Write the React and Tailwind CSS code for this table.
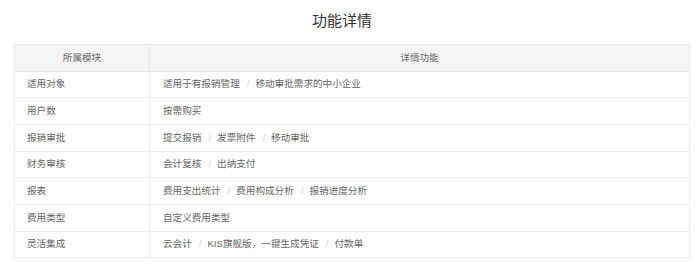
import React from "react";

const rows = [
  ["适用对象", ["适用于有报销管理", "移动审批需求的中小企业"]],
  ["用户数", ["按需购买"]],
  ["报销审批", ["提交报销", "发票附件", "移动审批"]],
  ["财务审核", ["会计复核", "出纳支付"]],
  ["报表", ["费用支出统计", "费用构成分析", "报销进度分析"]],
  ["费用类型", ["自定义费用类型"]],
  ["灵活集成", ["云会计", "KIS旗舰版，一键生成凭证", "付款单"]],
];

export default function App() {
  return (
    <div
      className="w-[700px] h-[270px] bg-white overflow-hidden"
      style={{ fontFamily: '"Liberation Sans", "Noto Sans CJK SC", sans-serif' }}
    >
      <div className="h-[44px] flex items-center justify-center pr-[16px] pb-[2px] text-[15px] text-[#333]">
        功能详情
      </div>
      <table className="ml-[14px] w-[676px] border-collapse border border-[#e8e8e8] text-[9.6px] text-[#666]">
        <thead>
          <tr className="h-[26.67px] bg-[#f5f5f5]">
            <th className="w-[135px] font-normal text-center border border-[#e8e8e8] p-0">所属模块</th>
            <th className="font-normal text-center border border-[#e8e8e8] p-0">详情功能</th>
          </tr>
        </thead>
        <tbody>
          {rows.map(([k, items]) => (
            <tr key={k} className="h-[26.67px]">
              <td className="border border-[#ececec] pl-[12px] py-0">{k}</td>
              <td className="border border-[#ececec] pl-[13px] py-0">
                {items.map((it, i) => (
                  <span key={i}>
                    {i > 0 && <span className="text-[#d0d0d0] ml-[7px] mr-[6px]">/</span>}
                    {it}
                  </span>
                ))}
              </td>
            </tr>
          ))}
        </tbody>
      </table>
    </div>
  );
}
